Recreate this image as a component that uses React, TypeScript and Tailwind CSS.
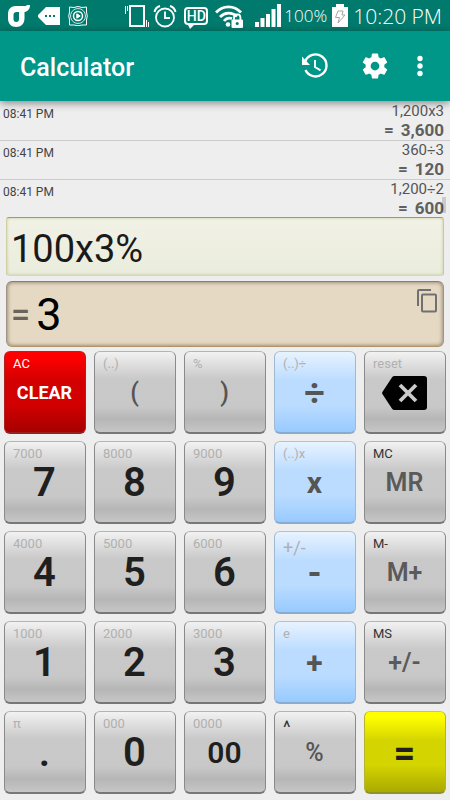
import React, { useState } from "react";
import clsx from "clsx";

type KeyTone = "gray" | "blue" | "red" | "yellow";
type KeySize = "digit" | "double" | "op" | "sign" | "wide" | "equals" | "text" | "small";

type CalcKey = {
  label: string;
  hint?: string;
  tone?: KeyTone;
  size?: KeySize;
  darkHint?: boolean;
  bigHint?: boolean;
};

const history = [
  { time: "08:41 PM", expression: "1,200x3", result: "3,600" },
  { time: "08:41 PM", expression: "360÷3", result: "120" },
  { time: "08:41 PM", expression: "1,200÷2", result: "600" },
];

const keys: CalcKey[] = [
  { label: "CLEAR", hint: "AC", tone: "red", size: "small" },
  { label: "(", hint: "(..)", size: "op" },
  { label: ")", hint: "%", size: "op" },
  { label: "÷", hint: "(..)÷", tone: "blue", size: "wide" },
  { label: "backspace", hint: "reset" },

  { label: "7", hint: "7000", size: "digit" },
  { label: "8", hint: "8000", size: "digit" },
  { label: "9", hint: "9000", size: "digit" },
  { label: "x", hint: "(..)x", tone: "blue", size: "sign" },
  { label: "MR", hint: "MC", size: "text", darkHint: true },

  { label: "4", hint: "4000", size: "digit" },
  { label: "5", hint: "5000", size: "digit" },
  { label: "6", hint: "6000", size: "digit" },
  { label: "-", hint: "+/-", tone: "blue", size: "wide", bigHint: true },
  { label: "M+", hint: "M-", size: "text", darkHint: true },

  { label: "1", hint: "1000", size: "digit" },
  { label: "2", hint: "2000", size: "digit" },
  { label: "3", hint: "3000", size: "digit" },
  { label: "+", hint: "e", tone: "blue", size: "sign" },
  { label: "+/-", hint: "MS", size: "text", darkHint: true },

  { label: ".", hint: "π", size: "digit" },
  { label: "0", hint: "000", size: "digit" },
  { label: "00", hint: "0000", size: "double" },
  { label: "%", hint: "^", size: "op", darkHint: true, bigHint: true },
  { label: "=", tone: "yellow", size: "equals" },
];

const toneClass: Record<KeyTone, string> = {
  gray: "border-t-[#b4b4b4] border-x-[#8a8a8a] border-b-[#777777] bg-[linear-gradient(#f2f2f2,#dedede_16%,#c9c9c9_34%,#c8c8c8_68%,#b6b6b6_84%,#c6c6c6)]",
  blue: "border-t-[#b2c2d2] border-x-[#9fb9d3] border-b-[#88abd0] bg-[linear-gradient(#e8f3ff,#bbdcff_36%,#bbdcff_66%,#98caff)]",
  red: "border-t-[#d81414] border-x-[#b02020] border-b-[#982020] bg-[linear-gradient(#ff0000,#ff0000_6%,#d20000_36%,#d20000_66%,#a60000)]",
  yellow:
    "border-t-[#cfcf20] border-x-[#b4b430] border-b-[#92922c] bg-[linear-gradient(#ffff00,#ffff00_6%,#d4d400_36%,#d4d400_66%,#aaaa00)]",
};

const sizeClass: Record<KeySize, string> = {
  digit: "text-[40px] font-semibold text-[#1f1f1f]",
  double: "text-[30px] font-semibold text-[#1f1f1f]",
  op: "text-[25px] font-medium text-[#555555]",
  sign: "text-[30px] font-bold text-[#555555]",
  wide: "text-[36px] font-bold text-[#555555]",
  equals: "text-[38px] font-bold text-[#1f1f1f]",
  text: "text-[25px] font-semibold text-[#5a5a5a]",
  small: "text-[18px] font-bold text-white",
};

function BackspaceIcon() {
  return (
    <svg width="45" height="34" viewBox="0 0 45 34" aria-hidden="true">
      <path d="M12.5 0H42a3 3 0 0 1 3 3v28a3 3 0 0 1-3 3H12.5a3 3 0 0 1-2.4-1.3L.4 18a2 2 0 0 1 0-2L10.1 1.300A3 3 0 0 1 12.5 0z" />
      <path d="M18 9l16 16M34 9l-16 16" stroke="#cbcbcb" strokeWidth="3.800" />
    </svg>
  );
}

function Key({ item, onPress }: { item: CalcKey; onPress: (k: string) => void }) {
  const { label, hint, tone = "gray", size = "text", darkHint, bigHint } = item;
  return (
    <button
      type="button"
      aria-label={label}
      onClick={() => onPress(label)}
      className={clsx(
        "relative flex h-[83px] items-center justify-center rounded-md border border-b-2 pt-px pr-px",
        toneClass[tone]
      )}
    >
      {hint && (
        <span
          className={clsx(
            "absolute left-2 top-1",
            bigHint ? "text-[18px] leading-6" : "text-[13px] leading-4",
            tone === "red" ? "text-white" : darkHint ? "text-[#333333]" : "text-[#b0b0b0]"
          )}
        >
          {hint}
        </span>
      )}
      {label === "backspace" ? (
        <BackspaceIcon />
      ) : (
        <span className={clsx("leading-none", sizeClass[size])}>{label}</span>
      )}
    </button>
  );
}

function StatusBar() {
  return (
    <div className="flex h-[31px] items-center justify-between bg-[#007a6c] px-2 text-white">
      <div className="flex items-center gap-2">
        {/* Carrier logo */}
        <svg width="22" height="22" viewBox="0 0 22 22" aria-hidden="true">
          <path
            d="M8 1h9c1 0 1.500-.3 2-1h3c0 4-2 6.500-5.500 7v6.500c0 5-3.500 8.500-8.300 8.500S0 18.500 0 13.500V9c0-5 3-8 8-8zM8.500 7C6.500 7 5.500 8 5.500 10v4c0 2 1 3 2.800 3s2.700-1 2.700-3V7z"
            fill="white"
            fillRule="evenodd"
          />
        </svg>
        <svg width="22" height="18" viewBox="0 0 22 18" aria-hidden="true">
          <path d="M8 0h14v18H8L.5 10.500a2 2 0 0 1 0-3z" fill="white" />
          <path d="M7 8h2v2H7zM11 8h2v2h-2zM15 8h2v2h-2z" fill="#007a6c" />
        </svg>
        <svg width="20" height="20" viewBox="0 0 20 20" fill="none" stroke="white" aria-hidden="true">
          <path d="M6 1.500Q10-.5 14 1.500L18.500 1v5q1.500 4 0 8v5H14q-4 1.500-8 0H1.500v-5q-1.500-4 0-8V1z" />
          <circle cx="10" cy="10" r="7.500" strokeWidth=".8" />
          <circle cx="10" cy="10" r="4.500" strokeWidth="1.500" />
          <path d="M8.800 7.800v4.400l3.400-2.200z" fill="white" />
        </svg>
      </div>

      <div className="flex items-center gap-[7px]">
        {/* Vibrate */}
        <svg width="26" height="24" viewBox="0 0 26 24" fill="none" stroke="white" className="-mr-1" aria-hidden="true">
          <rect x="6" y="2" width="14" height="20" strokeWidth="2" />
          <path d="M1.500 2v8M3.500 2v5M22.500 16v7M24.500 18v5" />
        </svg>
        {/* Alarm */}
        <svg width="24" height="24" viewBox="0 0 24 24" fill="none" stroke="white" aria-hidden="true">
          <circle cx="12" cy="13.500" r="9" strokeWidth="1.800" />
          <path d="M12 7.500V14h5" strokeWidth="1.800" />
          <path d="M1.500 8C2 5 4 3 7 2M22.500 8C22 5 20 3 17 2" strokeWidth="2" />
        </svg>
        <div className="flex flex-col pt-1">
          <span className="w-6 rounded border-2 border-white text-center text-[14px] font-medium leading-[14px]">
            HD
          </span>
          <svg width="12" height="4" viewBox="0 0 12 4" aria-hidden="true">
            <path d="M4 0h6L6 4z" fill="white" />
          </svg>
        </div>
        {/* Wi-Fi */}
        <svg width="29" height="24" viewBox="0 0 29 24" fill="none" stroke="white" aria-hidden="true">
          <path d="M1 8.500C8 1 19 1 26 8.500" strokeWidth="2.800" />
          <path d="M5 13c5-5 12-5 17-.5" strokeWidth="2.800" />
          <path d="M9 17c2-2.500 5-3.500 8-2.500" strokeWidth="2.800" />
          <circle cx="13" cy="20.500" r="2.300" fill="white" stroke="none" />
          <rect x="16.500" y="15.500" width="11.500" height="8.500" rx="1" fill="white" stroke="none" />
          <path d="M19 16v-2.500a3.200 3.200 0 0 1 6.400 0V16" strokeWidth="1.800" />
          <circle cx="22.200" cy="19.500" r="1.500" fill="#007a6c" stroke="none" />
        </svg>
        {/* Signal */}
        <svg width="26" height="23" viewBox="0 0 26 23" fill="white" className="ml-1 -mr-1" aria-hidden="true">
          <path d="M0 18h4v5H0zM5.500 14h4v9h-4zM11 10h4v13h-4zM16.500 5h4v18h-4zM22 0h4v23h-4z" />
        </svg>
        <div className="flex items-center gap-[5px] font-['Open_Sans',sans-serif] font-light">
          <span className="text-[17px] leading-5">100%</span>
          <svg width="16" height="23" viewBox="0 0 16 23" aria-hidden="true">
            <path d="M4 0h8v3h4v20H0V3h4z" fill="white" />
            <path d="M6 7h5l-1 4h3l-7 8 1.500-5.500H3.500z" fill="none" stroke="#a5a5a5" />
          </svg>
          <span className="text-[21px] leading-6">10:20 PM</span>
        </div>
      </div>
    </div>
  );
}

export default function App() {
  const [expression, setExpression] = useState("100x3%");

  const handlePress = (label: string) => {
    if (label === "CLEAR") return setExpression("");
    if (label === "backspace") return setExpression((e) => e.slice(0, -1));
    if (label === "=" || label.startsWith("M")) return;
    setExpression((e) => e + label);
  };

  return (
    <div className="min-h-screen bg-[#eeeeee] pb-1 font-[Roboto,sans-serif]">
      <StatusBar />

      <header className="relative flex h-[70px] items-center justify-between bg-[#009688] pl-5 pr-[23px] text-white shadow-[0_2px_8px_rgba(0,0,0,0.45)]">
        <h1 className="pt-1 text-[25px] font-medium leading-8">Calculator</h1>
        <div className="flex items-center">
          <button type="button" aria-label="History" className="mr-[31px]">
            <svg width="28" height="28" viewBox="0 0 28 28" fill="none" aria-hidden="true">
              <path d="M4.200 9.500A11 11 0 1 1 4.500 18" stroke="white" strokeWidth="2.400" />
              <path d="M1 4.500v8.500h8z" fill="white" />
              <path d="M14 8v7l5.500 3.300" stroke="white" strokeWidth="2" />
            </svg>
          </button>
          <button type="button" aria-label="Settings" className="mr-[23px]">
            <svg width="30" height="30" viewBox="0 0 24 24" fill="white" aria-hidden="true">
              <path d="M19.430 12.980c.04-.32.070-.640.070-.980s-.030-.660-.070-.980l2.110-1.650c.190-.150.240-.420.120-.640l-2-3.460c-.120-.220-.390-.300-.610-.220l-2.490 1c-.520-.400-1.080-.730-1.690-.980l-.380-2.650C14.460 2.180 14.250 2 14 2h-4c-.250 0-.460.180-.490.420l-.380 2.650c-.610.250-1.170.590-1.690.980l-2.490-1c-.230-.090-.490 0-.610.220l-2 3.460c-.130.220-.070.490.120.640l2.110 1.650c-.040.320-.070.650-.070.980s.030.660.070.980l-2.110 1.650c-.190.150-.240.420-.120.640l2 3.460c.120.220.390.300.610.220l2.490-1c.520.400 1.080.730 1.690.980l.380 2.650c.030.240.240.420.490.420h4c.250 0 .460-.180.490-.420l.380-2.650c.610-.250 1.170-.590 1.690-.980l2.490 1c.230.090.490 0 .610-.220l2-3.460c.120-.220.070-.490-.120-.640l-2.110-1.650zM12 15.500c-1.930 0-3.500-1.570-3.500-3.500s1.570-3.500 3.500-3.500 3.500 1.570 3.500 3.500-1.570 3.500-3.500 3.500z" />
            </svg>
          </button>
          <button type="button" aria-label="More options" className="px-1">
            <svg width="6" height="22" viewBox="0 0 6 22" fill="white" aria-hidden="true">
              <circle cx="3" cy="3.500" r="2.700" />
              <circle cx="3" cy="11" r="2.700" />
              <circle cx="3" cy="18.500" r="2.700" />
            </svg>
          </button>
        </div>
      </header>

      {/* History list */}
      <div className="relative pt-px">
        <ul className="divide-y divide-[#cccccc]">
          {history.map((row, i) => (
            <li key={i} className="flex h-[39px] items-start justify-between pl-[3px] pr-[6px] last:h-[37px]">
              <span className="pt-[3px] text-[12px] leading-[18px] text-[#444444]">{row.time}</span>
              <span className="flex flex-col text-right">
                <span className="text-[15px] leading-[19px] text-[#555555]">{row.expression}</span>
                <span className="flex justify-end gap-[7px] text-[17px] font-bold leading-[19px] text-[#606060]">
                  <span>=</span>
                  <span>{row.result}</span>
                </span>
              </span>
            </li>
          ))}
        </ul>
        <div className="absolute bottom-1 right-1 h-4 w-1 bg-black/15" />
      </div>

      {/* Display */}
      <div className="flex flex-col gap-[5px] px-[6px]">
        <input
          type="text"
          aria-label="Expression"
          value={expression}
          onChange={(e) => setExpression(e.target.value)}
          className="h-[59px] w-full rounded-[3px] border border-b-[#d8d8b4] border-l-[#d0d0a4] border-r-[#c8c898] border-t-[#a0a050] bg-[linear-gradient(#f1f2e6,#eaecdc)] px-1 pt-1 text-[38px] leading-[48px] text-[#1a1a1a] shadow-[inset_0_0_3px_rgba(160,160,80,0.5)] outline-none"
        />
        <div className="flex h-[66px] items-center rounded-md border border-b-[#b09468] border-l-[#a09482] border-r-[#a09482] border-t-[#8a7e6c] bg-[#e5d9c3] pl-1 pr-[6px] shadow-[inset_0_0_4px_rgba(80,65,40,0.7)]">
          <output className="flex flex-1 items-center gap-[6px] leading-none">
            <span className="text-[34px] font-medium text-[#6b645a]">=</span>
            <span className="text-[45px] text-black">3</span>
          </output>
          <button type="button" aria-label="Copy" className="self-start pt-[7px]">
            <svg width="20" height="24" viewBox="0 0 20 24" fill="none" stroke="#707070" strokeWidth="2" aria-hidden="true">
              <path d="M14 1H2a1 1 0 0 0-1 1v15" />
              <rect x="5" y="5.500" width="14" height="17" rx="1" />
            </svg>
          </button>
        </div>
      </div>

      {/* Keypad */}
      <div className="grid grid-cols-5 gap-x-2 gap-y-[7px] px-1 pt-1">
        {keys.map((k) => (
          <Key key={k.label} item={k} onPress={handlePress} />
        ))}
      </div>
    </div>
  );
}
